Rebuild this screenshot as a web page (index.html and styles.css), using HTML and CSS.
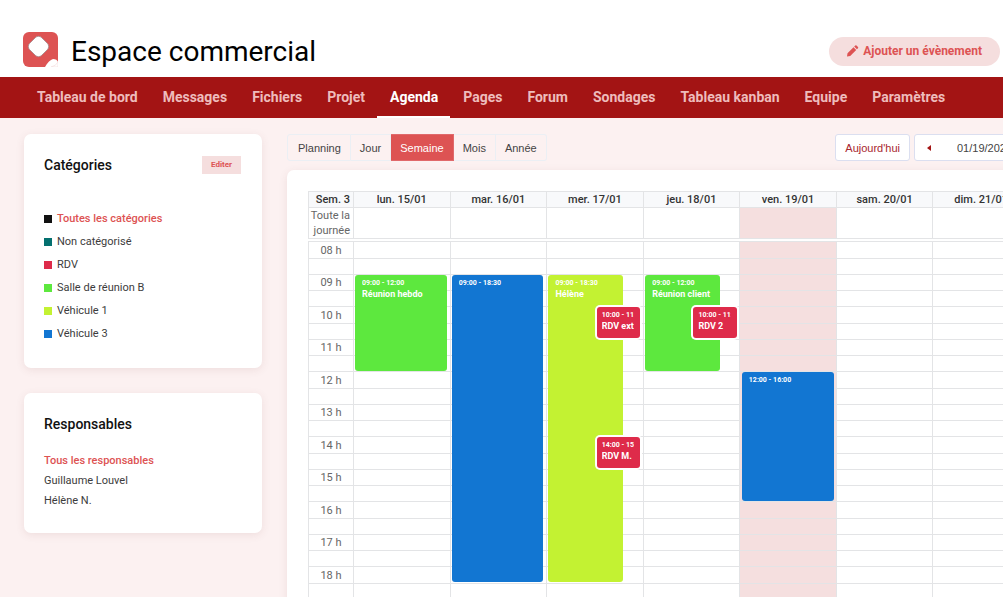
FILE: index.html
```html
<!DOCTYPE html>
<html lang="fr">
<head>
<meta charset="utf-8">
<title>Espace commercial - Agenda</title>
<link rel="stylesheet" href="styles.css">
</head>
<body>
<header class="header">
  <svg class="logo" viewBox="0 0 35 35" aria-hidden="true">
    <rect width="35" height="35" rx="6" fill="#dd5353"/>
    <rect x="7" y="6" width="17" height="17" rx="4.500" transform="rotate(45 15.500 14.500)" fill="#fff" stroke="#a8898b" stroke-width=".8"/>
    <path d="M22 35Q26 28 30 27Q34 27 35 30V35Z" fill="#fff"/>
    <path d="M28 35Q33 34 35 30V35Z" fill="#fff" stroke="#f5dede" stroke-width=".7"/>
  </svg>
  <h1 class="title">Espace commercial</h1>
  <button class="add" type="button">
    <svg class="pencil" viewBox="0 0 12 12" aria-hidden="true"><path d="M1 8.300 7 2.300 9.700 5 3.700 11 .5 11.500ZM7.700 1.600 8.800.5Q9.400 0 10 .5L11.500 2Q12 2.600 11.500 3.200L10.400 4.300Z" fill="currentColor"/></svg>
    Ajouter un évènement
  </button>
</header>
<nav class="nav">
  <a href="#">Tableau de bord</a><a href="#">Messages</a><a href="#">Fichiers</a><a href="#">Projet</a><a href="#" class="current" aria-current="page">Agenda</a><a href="#">Pages</a><a href="#">Forum</a><a href="#">Sondages</a><a href="#">Tableau kanban</a><a href="#">Equipe</a><a href="#">Paramètres</a>
</nav>
<main class="layout">
  <aside class="sidebar">
    <section class="card categories">
      <div class="card-head"><h2>Catégories</h2><button class="edit" type="button">Editer</button></div>
      <ul>
        <li><i class="dot black"></i><a href="#" class="selected">Toutes les catégories</a></li>
        <li><i class="dot teal"></i><a href="#">Non catégorisé</a></li>
        <li><i class="dot red"></i><a href="#">RDV</a></li>
        <li><i class="dot green"></i><a href="#">Salle de réunion B</a></li>
        <li><i class="dot lime"></i><a href="#">Véhicule 1</a></li>
        <li><i class="dot blue"></i><a href="#">Véhicule 3</a></li>
      </ul>
    </section>
    <section class="card people">
      <h2>Responsables</h2>
      <ul>
        <li><a href="#" class="selected">Tous les responsables</a></li>
        <li><a href="#">Guillaume Louvel</a></li>
        <li><a href="#">Hélène N.</a></li>
      </ul>
    </section>
  </aside>
  <section class="agenda">
    <div class="toolbar">
      <div class="views"><button type="button">Planning</button><button type="button">Jour</button><button type="button" class="on">Semaine</button><button type="button">Mois</button><button type="button">Année</button></div>
      <div class="dates">
        <button type="button" class="today-btn">Aujourd'hui</button>
        <div class="picker">
          <button type="button" aria-label="Semaine précédente"><svg viewBox="0 0 4 6" aria-hidden="true"><path d="M4 0V6L0 3Z" fill="#a31414"/></svg></button>
          <input type="text" value="01/19/2024" aria-label="Date">
        </div>
      </div>
    </div>
    <div class="card calendar">
      <table class="days">
        <thead><tr><th class="axis">Sem. 3<th>lun. 15/01<th>mar. 16/01<th>mer. 17/01<th>jeu. 18/01<th>ven. 19/01<th>sam. 20/01<th>dim. 21/01</tr></thead>
        <tbody><tr><th class="axis">Toute la journée<td><td><td><td><td class="today"><td><td></tr></tbody>
      </table>
      <div class="slots-area">
        <table class="slots">
          <tbody>
          <tr><th class="axis">08 h<td><td><td><td><td class="today"><td><td></tr>
          <tr><th class="axis"><td><td><td><td><td class="today"><td><td></tr>
          <tr><th class="axis">09 h<td><td><td><td><td class="today"><td><td></tr>
          <tr><th class="axis"><td><td><td><td><td class="today"><td><td></tr>
          <tr><th class="axis">10 h<td><td><td><td><td class="today"><td><td></tr>
          <tr><th class="axis"><td><td><td><td><td class="today"><td><td></tr>
          <tr><th class="axis">11 h<td><td><td><td><td class="today"><td><td></tr>
          <tr><th class="axis"><td><td><td><td><td class="today"><td><td></tr>
          <tr><th class="axis">12 h<td><td><td><td><td class="today"><td><td></tr>
          <tr><th class="axis"><td><td><td><td><td class="today"><td><td></tr>
          <tr><th class="axis">13 h<td><td><td><td><td class="today"><td><td></tr>
          <tr><th class="axis"><td><td><td><td><td class="today"><td><td></tr>
          <tr><th class="axis">14 h<td><td><td><td><td class="today"><td><td></tr>
          <tr><th class="axis"><td><td><td><td><td class="today"><td><td></tr>
          <tr><th class="axis">15 h<td><td><td><td><td class="today"><td><td></tr>
          <tr><th class="axis"><td><td><td><td><td class="today"><td><td></tr>
          <tr><th class="axis">16 h<td><td><td><td><td class="today"><td><td></tr>
          <tr><th class="axis"><td><td><td><td><td class="today"><td><td></tr>
          <tr><th class="axis">17 h<td><td><td><td><td class="today"><td><td></tr>
          <tr><th class="axis"><td><td><td><td><td class="today"><td><td></tr>
          <tr><th class="axis">18 h<td><td><td><td><td class="today"><td><td></tr>
          <tr><th class="axis"><td><td><td><td><td class="today"><td><td></tr>
          </tbody>
        </table>
        <div class="events">
          <div class="day"><article class="event green" style="--start:1;--hours:3"><time>09:00 - 12:00</time><b>Réunion hebdo</b></article></div>
          <div class="day"><article class="event blue" style="--start:1;--hours:9.5"><time>09:00 - 18:30</time></article></div>
          <div class="day">
            <article class="event lime wide" style="--start:1;--hours:9.5"><time>09:00 - 18:30</time><b>Hélène</b></article>
            <article class="event red over" style="--start:2;--hours:1"><time>10:00 - 11:00</time><b>RDV ext</b></article>
            <article class="event red over" style="--start:6;--hours:1"><time>14:00 - 15:00</time><b>RDV M.</b></article>
          </div>
          <div class="day">
            <article class="event green wide" style="--start:1;--hours:3"><time>09:00 - 12:00</time><b>Réunion client</b></article>
            <article class="event red over" style="--start:2;--hours:1"><time>10:00 - 11:00</time><b>RDV 2</b></article>
          </div>
          <div class="day"><article class="event blue" style="--start:4;--hours:4"><time>12:00 - 16:00</time></article></div>
          <div class="day"></div>
          <div class="day"></div>
        </div>
      </div>
    </div>
  </section>
</main>
</body>
</html>
```
FILE: styles.css
```css
* { box-sizing: border-box; }
body {
  margin: 0;
  height: 100vh;
  overflow: hidden;
  background: #fcf1f1;
  color: #3c3c3c;
  font: 11px/16px Roboto, sans-serif;
}
h1, h2, ul { margin: 0; padding: 0; list-style: none; }
a { color: inherit; text-decoration: none; }
button { margin: 0; border: 0; font: inherit; cursor: pointer; }

.header {
  display: flex;
  align-items: center;
  background: #fff;
  padding: 27px 3px 5px 23px;
  height: 77px;
}
.logo { width: 35px; height: 35px; }
.title { margin-left: 13px; color: #000; font-size: 28px; font-weight: 400; line-height: 36px; padding-top: 4px; }
.add {
  margin-left: auto;
  display: flex;
  align-items: center;
  gap: 4px;
  height: 29px;
  margin-top: 3px;
  padding: 0 18px 0 17px;
  border-radius: 15px;
  background: #f5dede;
  color: #dd5353;
  font-size: 12px;
  font-weight: 700;
}
.pencil { width: 13px; height: 12px; }

.nav { display: flex; padding: 0 24px; background: #a31414; }
.nav a {
  padding: 12px 12px 10px 13px;
  border-bottom: 2px solid transparent;
  color: #eebcbc;
  font-size: 14px;
  font-weight: 700;
  line-height: 17px;
  white-space: nowrap;
}
.nav .current { color: #fff; border-color: #fff; }

.layout { display: flex; align-items: flex-start; gap: 25px; padding: 16px 24px; }
.sidebar { flex: 0 0 238px; display: flex; flex-direction: column; gap: 25px; }
.card { background: #fff; border-radius: 7px; box-shadow: 0 2px 8px rgba(120, 60, 60, .1); }
.sidebar .card { padding: 21px 21px 20px 20px; }
.card h2 { color: #111; font-size: 14px; font-weight: 500; line-height: 20px; }
.card-head { display: flex; align-items: center; justify-content: space-between; }
.edit { height: 18px; padding: 0 9px; background: #f5dede; color: #dd5353; font-size: 8px; line-height: 18px; font-weight: 700; }
.categories ul { padding: 32px 0 3px; }
.categories li { display: flex; align-items: center; gap: 5px; height: 23px; }
.people ul { padding: 17px 0 2px; }
.people li { height: 20px; line-height: 20px; }
.selected { color: #dd5353; font-weight: 500; }
.dot { width: 8px; height: 8px; }

.black { background: #111; }
.teal { background: #04706f; }
.red { background: #de2b4a; }
.green { background: #5de83e; }
.lime { background: #c3f232; }
.blue { background: #1276d2; }

.agenda { flex: 1 0 764px; }
.toolbar { display: flex; justify-content: space-between; height: 36px; font: 11px/16px "Liberation Sans", Arial, sans-serif; }
.views { display: flex; align-self: flex-start; }
.views button { height: 27px; padding: 0 9px; border: 1px solid #ebeff4; border-left-width: 0; background: transparent; color: #444; }
.views button:first-child { padding-left: 10px; border-left-width: 1px; border-radius: 3px 0 0 3px; }
.views button:last-child { border-radius: 0 3px 3px 0; }
.views .on { background: #dd5353; border-color: #e0696b; color: #fff; }
.dates { display: flex; gap: 4px; }
.today-btn, .picker { height: 27px; border: 1px solid #dbdff0; border-radius: 3px; background: #fff; }
.today-btn { padding: 0 9px; color: #a8262e; }
.picker { display: flex; align-items: center; width: 137px; }
.picker button { width: 27px; padding: 0; background: none; line-height: 6px; }
.picker svg { width: 4px; height: 6px; }
.picker input { flex: 1; min-width: 0; padding: 0 0 0 15px; border: 0; background: none; color: #444; font: inherit; }

.calendar { padding: 21px; }
table { width: 100%; table-layout: fixed; border-collapse: collapse; }
th, td { padding: 0; border: 1px solid #e3e4e6; }
.axis { width: 45px; }
.days thead th { height: 16px; background: #f8f9fb; color: #333; font-weight: 500; line-height: 15px; }
.days tbody .axis { padding-right: 3px; color: #666; font-weight: 400; line-height: 15px; text-align: right; }
.days thead .axis { padding-right: 3px; text-align: right; }
.slots-area { position: relative; margin-top: 2px; }
.slots .axis { color: #666; font-weight: 400; line-height: 15px; }
.slots tr { height: 16px; }
.slots tr:nth-child(4n+1) { height: 17px; }
.today { background: #f5dfdf; }

/* Events float over the slot grid; one hour is 65px / 2 tall. */
.events { position: absolute; inset: 0 0 0 45px; display: grid; grid-template-columns: repeat(7, 1fr); }
.day { position: relative; }
.event {
  position: absolute;
  left: 2px;
  right: 3px;
  top: calc(var(--start) * 65px / 2 + 1px);
  height: calc(var(--hours) * 65px / 2 - 1px);
  padding: 2px 4px 0 7px;
  overflow: hidden;
  border-radius: 3px;
  color: #fff;
  font-size: 9px;
  line-height: 11px;
  white-space: nowrap;
}
.event time, .event b { display: block; overflow: hidden; font-weight: 700; }
.event time { font-size: 7px; line-height: 12px; }
.wide { right: 21%; }
.over { left: 52%; height: calc(var(--hours) * 65px / 2 - 2px); padding-left: 5px; padding-right: 6px; box-shadow: 0 0 0 2px #fff; }
```
